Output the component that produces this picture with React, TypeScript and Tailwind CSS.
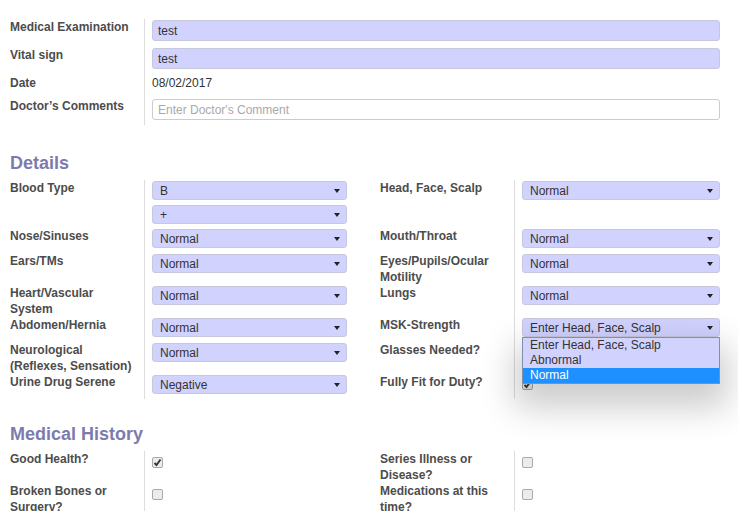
import { ReactNode } from "react";

const Arrow = () => (
    <svg width="6" height="5" viewBox="0 0 6 5" className="absolute right-[6px] top-1/2 -translate-y-1/2">
        <path d="M0 0.5 L6 0.5 L3 4.5 Z" fill="#222" />
    </svg>
);

const Select = ({ value, children }: { value: string; children?: ReactNode }) => (
    <div className="relative">
        <div className="relative h-[19px] w-full rounded-[3px] border border-[#c8c8dc] bg-[#d2d2ff] pl-[7px] text-[12px] leading-[18px] text-[#333]">
            {value}
            <Arrow />
        </div>
        {children}
    </div>
);

const Checkbox = ({ checked }: { checked?: boolean }) => (
    <div className="flex h-[11px] w-[11px] items-center justify-center rounded-[2px] border border-[#a9a9a9] bg-[#ececec]">
        {checked && (
            <svg width="9" height="9" viewBox="0 0 9 9">
                <path d="M1.5 5 L3.5 7 L7.5 1.5" stroke="#333" strokeWidth="1.8" fill="none" />
            </svg>
        )}
    </div>
);

const Label = ({ children }: { children: ReactNode }) => (
    <div className="pr-2 text-[12px] font-bold leading-[16px] text-[#4c4c4c]">{children}</div>
);

const Cell = ({ children, pt = "pt-[1px]" }: { children?: ReactNode; pt?: string }) => (
    <div className={"border-l border-[#ddd] pl-[7px] " + pt}>{children}</div>
);

type Row = {
    h: string;
    l: ReactNode;
    lv: ReactNode;
    r: ReactNode;
    rv: ReactNode;
    pt?: string;
};

const TwoCol = ({ rows }: { rows: Row[] }) => (
    <div>
        {rows.map((row, i) => (
            <div key={i} className={"grid grid-cols-[134px_203px_33px_134px_1fr] " + row.h}>
                <Label>{row.l}</Label>
                <Cell pt={row.pt}>{row.lv}</Cell>
                <div />
                <Label>{row.r}</Label>
                <Cell pt={row.pt}>{row.rv}</Cell>
            </div>
        ))}
    </div>
);

const Heading = ({ children }: { children: ReactNode }) => (
    <h2 className="text-[18px] font-bold leading-[22px] text-[#7c7bad]">{children}</h2>
);

const App = () => {
    const details: Row[] = [
        {
            h: "h-[48px]",
            l: "Blood Type",
            lv: (
                <div className="flex flex-col gap-[5px]">
                    <Select value="B" />
                    <Select value="+" />
                </div>
            ),
            r: "Head, Face, Scalp",
            rv: <Select value="Normal" />,
        },
        { h: "h-[25px]", l: "Nose/Sinuses", lv: <Select value="Normal" />, r: "Mouth/Throat", rv: <Select value="Normal" /> },
        { h: "h-[32px]", l: "Ears/TMs", lv: <Select value="Normal" />, r: "Eyes/Pupils/Ocular Motility", rv: <Select value="Normal" /> },
        { h: "h-[32px]", l: "Heart/Vascular System", lv: <Select value="Normal" />, r: "Lungs", rv: <Select value="Normal" /> },
        {
            h: "h-[25px]",
            l: "Abdomen/Hernia",
            lv: <Select value="Normal" />,
            r: "MSK-Strength",
            rv: (
                <Select value="Enter Head, Face, Scalp">
                    <div className="absolute left-0 right-0 top-[19px] z-10 border border-[#7f8fb0] bg-[#d2d2ff] text-[12px] leading-[15px] text-[#333] shadow-[0_16px_34px_8px_rgba(0,0,0,0.2)]">
                        <div className="pl-[7px]">Enter Head, Face, Scalp</div>
                        <div className="pl-[7px]">Abnormal</div>
                        <div className="bg-[#1e90ff] pl-[7px] text-white">Normal</div>
                    </div>
                </Select>
            ),
        },
        {
            h: "h-[32px]",
            l: "Neurological (Reflexes, Sensation)",
            lv: <Select value="Normal" />,
            r: "Glasses Needed?",
            rv: (
                <div className="pt-[5px]">
                    <Checkbox />
                </div>
            ),
        },
        {
            h: "h-[25px]",
            l: "Urine Drug Serene",
            lv: <Select value="Negative" />,
            r: "Fully Fit for Duty?",
            rv: (
                <div className="pt-[4px]">
                    <Checkbox checked />
                </div>
            ),
        },
    ];

    const history: Row[] = [
        {
            h: "h-[32px]",
            pt: "pt-[6px]",
            l: "Good Health?",
            lv: <Checkbox checked />,
            r: "Series Illness or Disease?",
            rv: <Checkbox />,
        },
        {
            h: "h-[32px]",
            pt: "pt-[6px]",
            l: "Broken Bones or Surgery?",
            lv: <Checkbox />,
            r: "Medications at this time?",
            rv: <Checkbox />,
        },
    ];

    return (
        <div className="h-[511px] overflow-hidden bg-white pl-[10px] pr-[18px] pt-[19px] font-['Liberation_Sans',Arial,sans-serif]">
            <div className="grid grid-cols-[134px_1fr]">
                <div className="h-[28px]">
                    <Label>Medical Examination</Label>
                </div>
                <Cell>
                    <div className="h-[21px] rounded-[3px] border border-[#c8c8dc] bg-[#d2d2ff] pl-[5px] text-[12px] leading-[20px] text-[#333]">test</div>
                </Cell>
                <div className="h-[28px]">
                    <Label>Vital sign</Label>
                </div>
                <Cell>
                    <div className="h-[21px] rounded-[3px] border border-[#c8c8dc] bg-[#d2d2ff] pl-[5px] text-[12px] leading-[20px] text-[#333]">test</div>
                </Cell>
                <div className="h-[23px]">
                    <Label>Date</Label>
                </div>
                <Cell pt="pt-0">
                    <div className="text-[12px] leading-[16px] text-[#333]">08/02/2017</div>
                </Cell>
                <div className="h-[27px]">
                    <Label>Doctor’s Comments</Label>
                </div>
                <Cell>
                    <div className="h-[21px] rounded-[3px] border border-[#ccc] bg-white pl-[5px] text-[12px] leading-[20px] text-[#a9a9a9]">Enter Doctor's Comment</div>
                </Cell>
            </div>

            <div className="mb-[6px] mt-[27px]">
                <Heading>Details</Heading>
            </div>
            <TwoCol rows={details} />

            <div className="mb-[6px] mt-[24px]">
                <Heading>Medical History</Heading>
            </div>
            <TwoCol rows={history} />
        </div>
    );
};

export default App;
